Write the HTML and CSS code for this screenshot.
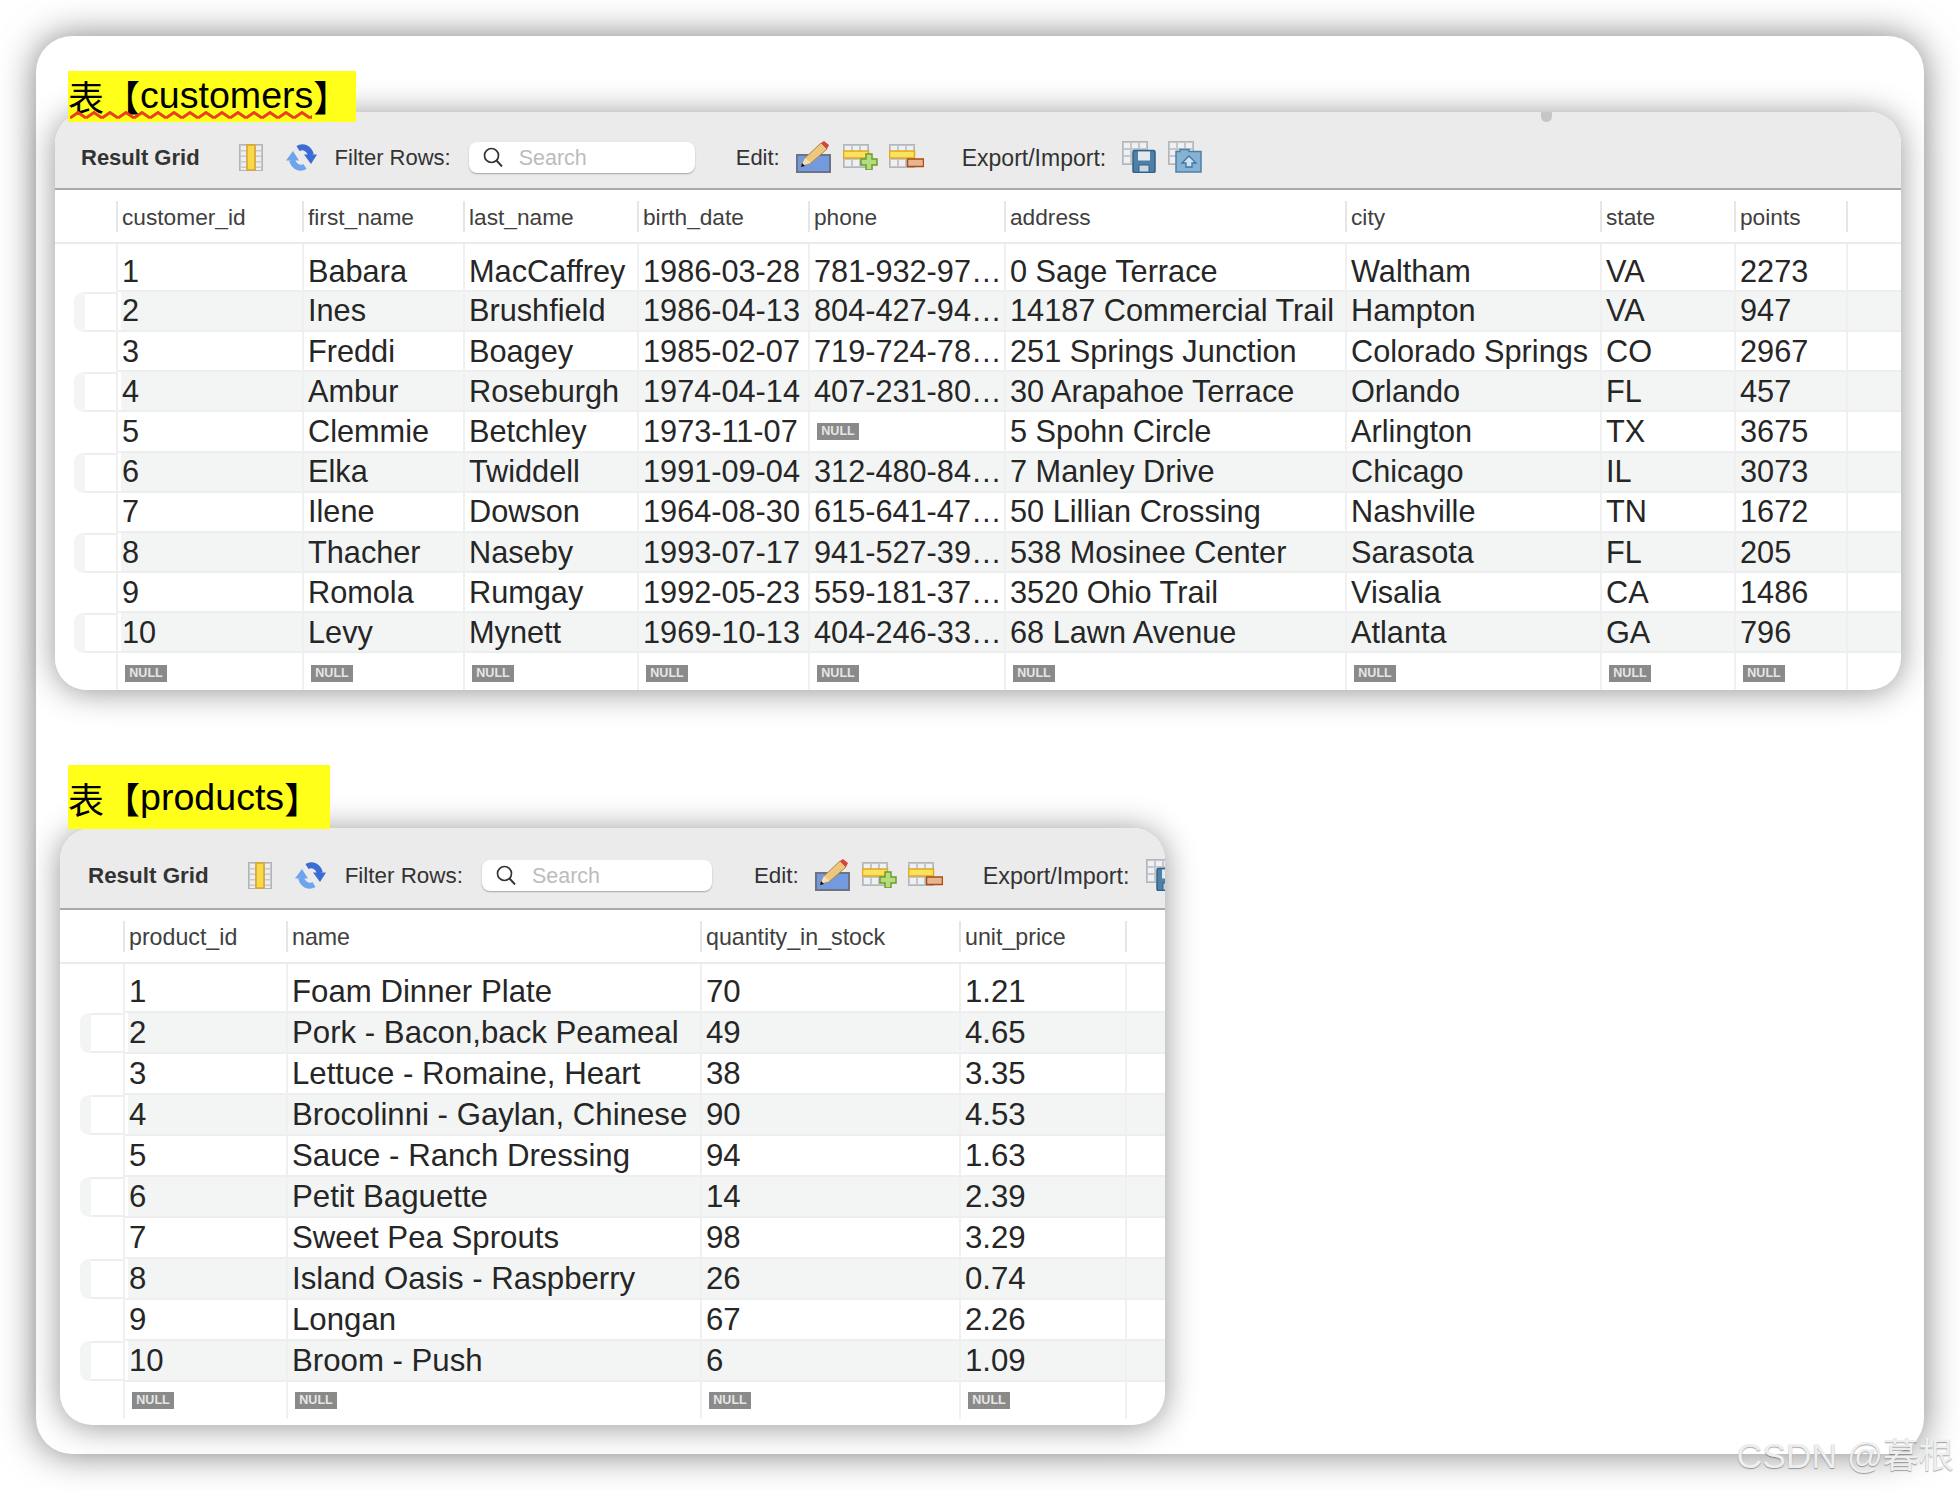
FILE: index.html
```html
<!DOCTYPE html>
<html lang="zh">
<head>
<meta charset="utf-8">
<title>customers / products</title>
<link rel="stylesheet" href="styles.css">
</head>
<body>
<svg class="sprite" xmlns="http://www.w3.org/2000/svg">
  <g id="g-grid">
    <rect x="0.5" y="0.5" width="25" height="23" fill="#c3c6ca" stroke="#b4b7ba"/>
    <path d="M2 2h6v5H2zM10 2h6v5h-6zM18 2h6v5h-6zM2 9h6v5H2zM10 9h6v5h-6zM18 9h6v5h-6zM2 16h6v6H2zM10 16h6v6h-6zM18 16h6v6h-6z" fill="#eef0f3"/>
  </g>
  <symbol id="ic-cols" viewBox="0 0 24 27">
    <rect x="0.5" y="0.5" width="23" height="26" fill="#c6c8ca" stroke="#b2b4b6"/>
    <path d="M2 2h5v4H2zM2 7.500h5v4H2zM2 13h5v4H2zM2 18.500h5v4H2zM2 24h5v2H2zM17 2h5v4h-5zM17 7.500h5v4h-5zM17 13h5v4h-5zM17 18.500h5v4h-5zM17 24h5v2h-5z" fill="#eceef0"/>
    <rect x="8" y="1" width="8" height="25" fill="#f8d94a" stroke="#dca32a" stroke-width="1.500"/>
  </symbol>
  <symbol id="ic-refresh" viewBox="0 0 31 27">
    <path d="M12 4.500C17 1.500 23 4 25 11" fill="none" stroke="#3b6bd4" stroke-width="6"/>
    <path d="M18 10.500H31L25 20Z" fill="#3b6bd4"/>
    <path d="M19 22.500C14 25.500 8 23 6 16" fill="none" stroke="#6ea3ee" stroke-width="6"/>
    <path d="M0 16.500H13L7 7Z" fill="#6ea3ee"/>
  </symbol>
  <symbol id="ic-pencil" viewBox="0 0 35 32">
    <rect x="1" y="14" width="33" height="17" fill="#7399de" stroke="#6b7480" stroke-width="2"/>
    <path d="M5 25 9 17 25 2 31 8 15 22 Z" fill="#edc77f" stroke="#a8854a"/>
    <path d="M5 25 9 17 15 22 Z" fill="#f3dfb5"/>
    <path d="M5 26 6 22 9 25Z" fill="#111"/>
    <path d="M25 2 28 0 33 4 31 8Z" fill="#d8443c"/>
  </symbol>
  <symbol id="ic-add" viewBox="0 0 35 26">
    <use href="#g-grid"/>
    <rect x="0.500" y="7" width="25" height="7" fill="#f9e25e" stroke="#e3a722" stroke-width="1.500"/>
    <path d="M23 10h6v5h5v6h-5v5h-6v-5h-5v-6h5z" fill="#b5dc7e" stroke="#6c9c2c" stroke-width="1.500"/>
  </symbol>
  <symbol id="ic-del" viewBox="0 0 35 26">
    <use href="#g-grid"/>
    <rect x="0.500" y="7" width="25" height="7" fill="#f9e25e" stroke="#e3a722" stroke-width="1.500"/>
    <rect x="18.500" y="15" width="16" height="7.500" fill="#e9b58d" stroke="#a84e14" stroke-width="1.500"/>
  </symbol>
  <symbol id="ic-export" viewBox="0 0 34 32">
    <use href="#g-grid"/>
    <rect x="11" y="9.500" width="22" height="22" rx="1.500" fill="#4f81a8" stroke="#2f6288" stroke-width="1.500"/>
    <rect x="16" y="10.500" width="12" height="9" fill="#e4e9ee"/>
    <rect x="17" y="24" width="10" height="7" fill="#c8d8e4" stroke="#2f6288"/>
  </symbol>
  <symbol id="ic-import" viewBox="0 0 34 32">
    <use href="#g-grid"/>
    <path d="M8 31V10.500h4v-2h9v2H33V31Z" fill="#86b2d4" stroke="#4d80a8" stroke-width="1.500"/>
    <path d="M21 15l7 7h-4v4h-6v-4h-4z" fill="#cfe2f0" stroke="#3f76a2" stroke-width="1.300"/>
  </symbol>
  <symbol id="ic-search" viewBox="0 0 20 20">
    <circle cx="8.500" cy="8.500" r="7" fill="none" stroke="#333" stroke-width="1.700"/>
    <path d="M13.500 13.500 19 19.500" stroke="#333" stroke-width="1.900" fill="none"/>
  </symbol>
</svg>

<main class="sheet">
  <h2 class="label label-customers"><span class="cjk">表【</span>customers<span class="cjk">】</span><svg class="squiggle" width="242" height="8" aria-hidden="true"><defs><pattern id="zig" width="16" height="8" patternUnits="userSpaceOnUse"><path d="M0 7 8 1.500 16 7" fill="none" stroke="#e8401c" stroke-width="3"/></pattern></defs><rect width="242" height="8" fill="url(#zig)"/></svg></h2>

  <section class="panel panel-customers">
    <span class="panel-dot"></span>
    <div class="toolbar">
      <strong class="tb-title">Result Grid</strong>
      <svg class="icon icon-cols"><use href="#ic-cols"/></svg>
      <svg class="icon icon-refresh"><use href="#ic-refresh"/></svg>
      <span class="tb-text tb-filter">Filter Rows:</span>
      <div class="search"><svg class="search-icon"><use href="#ic-search"/></svg><span class="search-text">Search</span></div>
      <span class="tb-text tb-edit">Edit:</span>
      <svg class="icon icon-pencil"><use href="#ic-pencil"/></svg>
      <svg class="icon icon-add"><use href="#ic-add"/></svg>
      <svg class="icon icon-del"><use href="#ic-del"/></svg>
      <span class="tb-text tb-export">Export/Import:</span>
      <svg class="icon icon-export"><use href="#ic-export"/></svg>
      <svg class="icon icon-import"><use href="#ic-import"/></svg>
    </div>
    <table class="grid">
      <colgroup><col class="c-head"><col class="c-1"><col class="c-2"><col class="c-3"><col class="c-4"><col class="c-5"><col class="c-6"><col class="c-7"><col class="c-8"><col class="c-9"><col></colgroup>
      <thead><tr><th class="sep"></th><th class="sep">customer_id</th><th class="sep">first_name</th><th class="sep">last_name</th><th class="sep">birth_date</th><th class="sep">phone</th><th class="sep">address</th><th class="sep">city</th><th class="sep">state</th><th class="sep">points</th><th></th></tr></thead>
      <tbody>
        <tr><td class="rh"><i></i></td><td>1</td><td>Babara</td><td>MacCaffrey</td><td>1986-03-28</td><td>781-932-97…</td><td>0 Sage Terrace</td><td>Waltham</td><td>VA</td><td>2273</td><td></td></tr>
        <tr><td class="rh"><i></i></td><td>2</td><td>Ines</td><td>Brushfield</td><td>1986-04-13</td><td>804-427-94…</td><td>14187 Commercial Trail</td><td>Hampton</td><td>VA</td><td>947</td><td></td></tr>
        <tr><td class="rh"><i></i></td><td>3</td><td>Freddi</td><td>Boagey</td><td>1985-02-07</td><td>719-724-78…</td><td>251 Springs Junction</td><td>Colorado Springs</td><td>CO</td><td>2967</td><td></td></tr>
        <tr><td class="rh"><i></i></td><td>4</td><td>Ambur</td><td>Roseburgh</td><td>1974-04-14</td><td>407-231-80…</td><td>30 Arapahoe Terrace</td><td>Orlando</td><td>FL</td><td>457</td><td></td></tr>
        <tr><td class="rh"><i></i></td><td>5</td><td>Clemmie</td><td>Betchley</td><td>1973-11-07</td><td><b class="null null-inline">NULL</b></td><td>5 Spohn Circle</td><td>Arlington</td><td>TX</td><td>3675</td><td></td></tr>
        <tr><td class="rh"><i></i></td><td>6</td><td>Elka</td><td>Twiddell</td><td>1991-09-04</td><td>312-480-84…</td><td>7 Manley Drive</td><td>Chicago</td><td>IL</td><td>3073</td><td></td></tr>
        <tr><td class="rh"><i></i></td><td>7</td><td>Ilene</td><td>Dowson</td><td>1964-08-30</td><td>615-641-47…</td><td>50 Lillian Crossing</td><td>Nashville</td><td>TN</td><td>1672</td><td></td></tr>
        <tr><td class="rh"><i></i></td><td>8</td><td>Thacher</td><td>Naseby</td><td>1993-07-17</td><td>941-527-39…</td><td>538 Mosinee Center</td><td>Sarasota</td><td>FL</td><td>205</td><td></td></tr>
        <tr><td class="rh"><i></i></td><td>9</td><td>Romola</td><td>Rumgay</td><td>1992-05-23</td><td>559-181-37…</td><td>3520 Ohio Trail</td><td>Visalia</td><td>CA</td><td>1486</td><td></td></tr>
        <tr><td class="rh"><i></i></td><td>10</td><td>Levy</td><td>Mynett</td><td>1969-10-13</td><td>404-246-33…</td><td>68 Lawn Avenue</td><td>Atlanta</td><td>GA</td><td>796</td><td></td></tr>
        <tr class="null-row"><td class="rh"></td><td><b class="null">NULL</b></td><td><b class="null">NULL</b></td><td><b class="null">NULL</b></td><td><b class="null">NULL</b></td><td><b class="null">NULL</b></td><td><b class="null">NULL</b></td><td><b class="null">NULL</b></td><td><b class="null">NULL</b></td><td><b class="null">NULL</b></td><td></td></tr>
      </tbody>
    </table>
  </section>

  <h2 class="label label-products"><span class="cjk">表【</span>products<span class="cjk">】</span></h2>

  <section class="panel panel-products">
    <div class="toolbar">
      <strong class="tb-title">Result Grid</strong>
      <svg class="icon icon-cols"><use href="#ic-cols"/></svg>
      <svg class="icon icon-refresh"><use href="#ic-refresh"/></svg>
      <span class="tb-text tb-filter">Filter Rows:</span>
      <div class="search"><svg class="search-icon"><use href="#ic-search"/></svg><span class="search-text">Search</span></div>
      <span class="tb-text tb-edit">Edit:</span>
      <svg class="icon icon-pencil"><use href="#ic-pencil"/></svg>
      <svg class="icon icon-add"><use href="#ic-add"/></svg>
      <svg class="icon icon-del"><use href="#ic-del"/></svg>
      <span class="tb-text tb-export">Export/Import:</span>
      <svg class="icon icon-export"><use href="#ic-export"/></svg>
    </div>
    <table class="grid">
      <colgroup><col class="c-head"><col class="c-1"><col class="c-2"><col class="c-3"><col class="c-4"><col></colgroup>
      <thead><tr><th class="sep"></th><th class="sep">product_id</th><th class="sep">name</th><th class="sep">quantity_in_stock</th><th class="sep">unit_price</th><th></th></tr></thead>
      <tbody>
        <tr><td class="rh"><i></i></td><td>1</td><td>Foam Dinner Plate</td><td>70</td><td>1.21</td><td></td></tr>
        <tr><td class="rh"><i></i></td><td>2</td><td>Pork - Bacon,back Peameal</td><td>49</td><td>4.65</td><td></td></tr>
        <tr><td class="rh"><i></i></td><td>3</td><td>Lettuce - Romaine, Heart</td><td>38</td><td>3.35</td><td></td></tr>
        <tr><td class="rh"><i></i></td><td>4</td><td>Brocolinni - Gaylan, Chinese</td><td>90</td><td>4.53</td><td></td></tr>
        <tr><td class="rh"><i></i></td><td>5</td><td>Sauce - Ranch Dressing</td><td>94</td><td>1.63</td><td></td></tr>
        <tr><td class="rh"><i></i></td><td>6</td><td>Petit Baguette</td><td>14</td><td>2.39</td><td></td></tr>
        <tr><td class="rh"><i></i></td><td>7</td><td>Sweet Pea Sprouts</td><td>98</td><td>3.29</td><td></td></tr>
        <tr><td class="rh"><i></i></td><td>8</td><td>Island Oasis - Raspberry</td><td>26</td><td>0.74</td><td></td></tr>
        <tr><td class="rh"><i></i></td><td>9</td><td>Longan</td><td>67</td><td>2.26</td><td></td></tr>
        <tr><td class="rh"><i></i></td><td>10</td><td>Broom - Push</td><td>6</td><td>1.09</td><td></td></tr>
        <tr class="null-row"><td class="rh"></td><td><b class="null">NULL</b></td><td><b class="null">NULL</b></td><td><b class="null">NULL</b></td><td><b class="null">NULL</b></td><td></td></tr>
      </tbody>
    </table>
  </section>
</main>
<div class="watermark">CSDN @暮根</div>
</body>
</html>
```

FILE: styles.css
```css
* { box-sizing: border-box; }
html, body { margin: 0; background: #fff; }
body {
  position: relative;
  width: 1960px;
  height: 1490px;
  overflow: hidden;
  font-family: "Liberation Sans", "Noto Sans CJK SC", sans-serif;
  color: #262626;
}
.sprite { display: none; }

.sheet {
  margin: 36px;
  width: 1888px;
  height: 1418px;
  padding: 35px 0 0 19px;
  background: #fff;
  border-radius: 36px;
  box-shadow: 0 0 36px rgba(0, 0, 0, .5);
}

/* yellow headings */
.label {
  position: relative;
  z-index: 2;
  display: flex;
  align-items: center;
  margin: 0 0 0 13px;
  background: #ffff1a;
  color: #000;
  font-size: 37.6px;
  font-weight: 400;
  white-space: nowrap;
}
.cjk { font-size: 36px; }
.label-customers { width: 288px; height: 51px; padding-bottom: 2px; margin-bottom: -10px; }
.label-products { width: 262px; height: 64px; padding-top: 1px; margin-top: 75px; margin-bottom: -1px; }
.squiggle { position: absolute; left: 2px; bottom: 3px; }

/* result-grid windows */
.panel {
  position: relative;
  overflow: hidden;
  background: #fff;
  border-radius: 32px;
  box-shadow: 0 2px 32px rgba(0, 0, 0, .42);
}
.panel-customers {
  --ui: 22px;
  --head: 22.7px;
  --cell: 30.7px;
  --row: 40.2px;
  --null-top: 12px;
  --lobe-left: 19px;
  width: 1846px;
  height: 578px;
}
.panel-products {
  --ui: 22.4px;
  --head: 23.2px;
  --cell: 31.2px;
  --row: 41px;
  --null-top: 10px;
  --lobe-left: 20px;
  width: 1105px;
  height: 597px;
  margin-left: 5px;
}
.panel-dot {
  position: absolute;
  left: 1486px;
  top: 0;
  width: 11px;
  height: 10px;
  border-radius: 0 0 6px 6px;
  background: #c6c6c6;
}

.toolbar {
  display: flex;
  align-items: center;
  height: 78px;
  padding: 14px 0 0 26px;
  background: #ebebeb;
  border-bottom: 2px solid #a9a9a9;
  font-size: var(--ui);
  white-space: nowrap;
}
.panel-products .toolbar { height: 82px; padding: 14px 0 0 28px; }
.tb-title { font-weight: 700; color: #333; padding-top: 2px; }
.tb-text { color: #333; padding-top: 2px; }
.icon { flex: none; display: block; }
.icon-cols { width: 24px; height: 27px; margin-left: 39px; }
.icon-refresh { width: 31px; height: 27px; margin-left: 23px; }
.tb-filter { margin-left: 18px; }
.search {
  flex: none;
  display: flex;
  align-items: center;
  width: 226px;
  height: 31px;
  margin-left: 18px;
  padding-left: 14px;
  background: #fff;
  border-radius: 8px;
  box-shadow: 0 1px 1.5px rgba(0, 0, 0, .3);
  color: #bcbcbc;
  font-size: 21.5px;
}
.search-icon { width: 20px; height: 20px; margin-right: 16px; }
.search-text { padding-top: 2px; }
.tb-edit { margin-left: 41px; }
.icon-pencil { width: 35px; height: 32px; margin-left: 16px; }
.icon-add { width: 35px; height: 26px; margin-left: 12px; }
.icon-del { width: 35px; height: 26px; margin-left: 11px; }
.tb-export { margin-left: 38px; font-size: 23px; }
.icon-export { width: 34px; height: 32px; margin-left: 16px; }
.icon-import { width: 34px; height: 32px; margin-left: 12px; }
.panel-products .tb-filter { margin-left: 19px; }
.panel-products .search { width: 230px; margin-left: 19px; }
.panel-products .tb-edit { margin-left: 42px; }
.panel-products .tb-export { margin-left: 40px; font-size: 23.4px; }

/* grid */
.grid {
  width: 100%;
  table-layout: fixed;
  border-collapse: separate;
  border-spacing: 0;
}
.panel-customers .c-head { width: 63px; }
.panel-customers .c-1 { width: 186px; }
.panel-customers .c-2 { width: 161px; }
.panel-customers .c-3 { width: 174px; }
.panel-customers .c-4 { width: 171px; }
.panel-customers .c-5 { width: 196px; }
.panel-customers .c-6 { width: 341px; }
.panel-customers .c-7 { width: 255px; }
.panel-customers .c-8 { width: 134px; }
.panel-customers .c-9 { width: 112px; }
.panel-products .c-head { width: 65px; }
.panel-products .c-1 { width: 163px; }
.panel-products .c-2 { width: 414px; }
.panel-products .c-3 { width: 259px; }
.panel-products .c-4 { width: 166px; }

.grid th {
  position: relative;
  height: 54px;
  padding: 2px 0 0 4px;
  border-bottom: 2px solid #ebebeb;
  font-size: var(--head);
  font-weight: 400;
  color: #404040;
  text-align: left;
  white-space: nowrap;
}
.grid th.sep::after {
  content: "";
  position: absolute;
  right: 0;
  top: 11px;
  width: 2px;
  height: 31px;
  background: #e6e6e6;
}
.grid td {
  height: var(--row);
  padding: 1px 0 0 4px;
  border-right: 2px solid #f0f0f0;
  border-bottom: 2px solid #eeeeee;
  font-size: var(--cell);
  white-space: nowrap;
  overflow: hidden;
  vertical-align: middle;
}
.grid td:last-child { border-right: 0; }
.grid tbody tr:first-child td { height: calc(var(--row) + 7.6px); padding-top: 9.6px; }
.grid tbody tr:nth-child(even) td { background: #f3f5f4; }
.grid tbody tr:nth-child(even) td:nth-child(2) { box-shadow: inset 3px 0 0 #fff; }
.grid td.rh,
.grid tbody tr:nth-child(even) td.rh,
.grid tbody tr:first-child td.rh { padding: 0; border-bottom: 0; background: #fff; }
.rh i { display: none; }
.grid tbody tr:nth-child(even) .rh i {
  display: block;
  height: 40px;
  margin-left: var(--lobe-left);
  border-radius: 9px 0 0 9px;
  background:
    linear-gradient(#eeeeee, #eeeeee) 11px 0 / 100% 2px no-repeat,
    linear-gradient(#eeeeee, #eeeeee) 11px 100% / 100% 2px no-repeat,
    linear-gradient(90deg, #f3f5f4 11px, #fff 11px);
}
.grid .null-row td { height: 37px; border-bottom: 0; vertical-align: top; padding-top: var(--null-top); padding-left: 7px; }
.null {
  display: block;
  width: 42px;
  height: 17px;
  background: #8a8a8a;
  color: #e6e6e6;
  font-size: 12.5px;
  font-weight: 700;
  line-height: 17px;
  text-align: center;
}
.null-inline { margin-left: 3px; }

.watermark {
  position: absolute;
  right: 6px;
  bottom: 12px;
  font-size: 35.5px;
  color: #eeeeee;
  text-shadow: 0 1px 1px rgba(0, 0, 0, .35);
  white-space: nowrap;
}
```
